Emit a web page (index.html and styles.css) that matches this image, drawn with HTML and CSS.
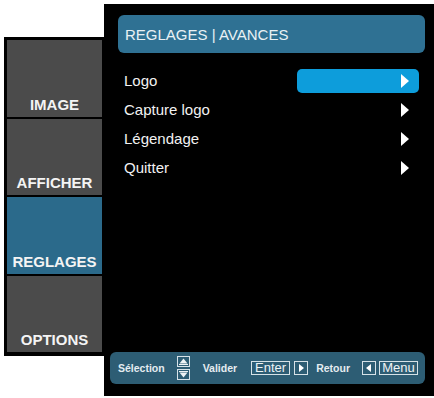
FILE: index.html
```html
<!DOCTYPE html>
<html>
<head>
<meta charset="utf-8">
<link rel="stylesheet" href="styles.css">
</head>
<body>
<div class="screen">
  <div class="sidebar">
    <div class="tile"><span>IMAGE</span></div>
    <div class="tile"><span>AFFICHER</span></div>
    <div class="tile active"><span>REGLAGES</span></div>
    <div class="tile"><span>OPTIONS</span></div>
  </div>
  <div class="panel">
    <div class="header">REGLAGES | AVANCES</div>
    <div class="list">
      <div class="row">
        <span class="label">Logo</span>
        <span class="value selected"><svg class="arrow" width="8" height="14" viewBox="0 0 8 14"><path d="M0 0 L8 7 L0 14 Z" fill="#fff"/></svg></span>
      </div>
      <div class="row">
        <span class="label">Capture logo</span>
        <span class="value"><svg class="arrow" width="8" height="14" viewBox="0 0 8 14"><path d="M0 0 L8 7 L0 14 Z" fill="#fff"/></svg></span>
      </div>
      <div class="row">
        <span class="label">Légendage</span>
        <span class="value"><svg class="arrow" width="8" height="14" viewBox="0 0 8 14"><path d="M0 0 L8 7 L0 14 Z" fill="#fff"/></svg></span>
      </div>
      <div class="row">
        <span class="label">Quitter</span>
        <span class="value"><svg class="arrow" width="8" height="14" viewBox="0 0 8 14"><path d="M0 0 L8 7 L0 14 Z" fill="#fff"/></svg></span>
      </div>
    </div>
    <div class="footer">
      <span class="hint hint-sel">Sélection</span>
      <span class="updown">
        <svg width="13" height="11" viewBox="0 0 13 11"><rect x="0.5" y="0.5" width="12" height="10" fill="none" stroke="#d6e2e8"/><path d="M2.5 7.5 L6.5 2.5 L10.5 7.5 Z" fill="#eef3f5"/><rect x="2" y="8" width="9" height="1" fill="#eef3f5"/></svg>
        <svg width="13" height="11" viewBox="0 0 13 11"><rect x="0.5" y="0.5" width="12" height="10" fill="none" stroke="#d6e2e8"/><rect x="2" y="2" width="9" height="1" fill="#eef3f5"/><path d="M2.5 3.5 L6.5 8.5 L10.5 3.5 Z" fill="#eef3f5"/></svg>
      </span>
      <span class="hint hint-val">Valider</span>
      <span class="key key-enter">Enter</span>
      <span class="keybox"><svg width="14" height="14" viewBox="0 0 14 14"><rect x="0.5" y="0.5" width="13" height="13" fill="none" stroke="#d6e2e8"/><path d="M5 3 L10 7 L5 11 Z" fill="#fff"/></svg></span>
      <span class="hint hint-ret">Retour</span>
      <span class="keybox"><svg width="14" height="14" viewBox="0 0 14 14"><rect x="0.5" y="0.5" width="13" height="13" fill="none" stroke="#d6e2e8"/><path d="M9 3 L4 7 L9 11 Z" fill="#fff"/></svg></span>
      <span class="key key-menu">Menu</span>
    </div>
  </div>
</div>
</body>
</html>
```
FILE: styles.css
```css
html, body {
  margin: 0;
  padding: 0;
  background: #ffffff;
}

body {
  width: 434px;
  height: 398px;
  overflow: hidden;
  font-family: "Liberation Sans", Arial, sans-serif;
}

.screen {
  display: flex;
  align-items: flex-start;
  padding-top: 4px;
}

.sidebar {
  margin-left: 4px;
  margin-top: 33px;
  width: 95px;
  height: 312px;
  background: #000;
  border-style: solid;
  border-color: #000;
  border-width: 3px 2px 4px 3px;
  display: flex;
  flex-direction: column;
  gap: 2px;
}

.tile {
  flex: 1;
  background: #4b4b4b;
  display: flex;
  align-items: flex-end;
  justify-content: center;
  padding-bottom: 5px;
  color: #f4f4f4;
  font-weight: bold;
  font-size: 15px;
  line-height: 15px;
}

.tile.active {
  background: #2b6a8b;
}

.panel {
  width: 330px;
  height: 392px;
  background: #000;
  display: flex;
  flex-direction: column;
}

.header {
  margin: 11px 9px 0 14px;
  height: 38px;
  background: #2f7193;
  border-radius: 6px;
  display: flex;
  align-items: center;
  padding-left: 7px;
  color: #e9f1f5;
  font-size: 15px;
  padding-top: 1px;
  box-sizing: border-box;
}

.list {
  flex: 1;
  margin-top: 13px;
  display: flex;
  flex-direction: column;
}

.row {
  height: 29px;
  display: flex;
  align-items: center;
}

.label {
  flex: 1;
  padding-left: 20px;
  color: #f2f2f2;
  font-size: 15px;
}

.value {
  width: 122px;
  height: 24px;
  margin-right: 15px;
  border-radius: 5px;
  display: flex;
  align-items: center;
  justify-content: flex-end;
  padding-right: 10px;
  box-sizing: border-box;
}

.value.selected {
  background: #0d9ddb;
}

.arrow {
  display: block;
}

.footer {
  margin: 0 9px 12px 6px;
  height: 32px;
  background: #2d5d74;
  border-radius: 6px;
  display: flex;
  align-items: center;
  color: #e4ecf0;
}

.hint {
  font-weight: bold;
  font-size: 10.5px;
}

.hint-sel {
  margin-left: 8px;
}

.updown {
  display: flex;
  flex-direction: column;
  gap: 2px;
  margin-left: 12px;
}

.updown svg {
  display: block;
}

.hint-val {
  margin-left: 13px;
}

.key {
  border: 1px solid #d6e2e8;
  height: 14px;
  box-sizing: border-box;
  font-size: 13px;
  line-height: 12px;
  display: flex;
  align-items: center;
  justify-content: center;
  color: #eef3f5;
}

.key-enter {
  width: 39px;
  margin-left: 14px;
}

.keybox {
  display: flex;
}

.keybox svg {
  display: block;
}

.key-enter + .keybox {
  margin-left: 4px;
}

.hint-ret {
  margin-left: 8px;
}

.hint-ret + .keybox {
  margin-left: 12px;
}

.key-menu {
  width: 39px;
  margin-left: 3px;
}
```
